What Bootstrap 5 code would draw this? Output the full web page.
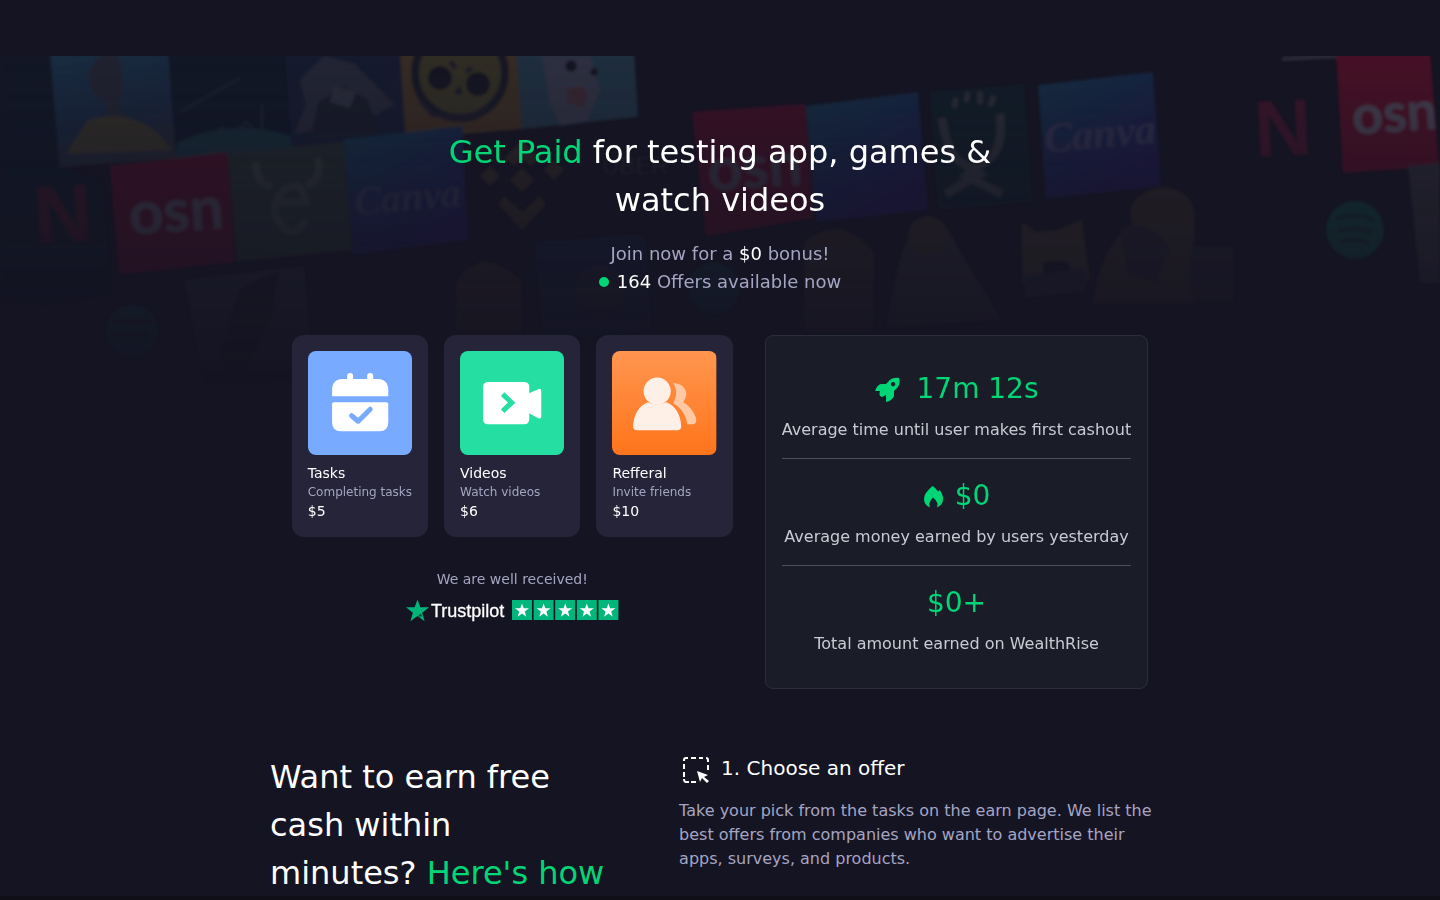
<!DOCTYPE html>
<html lang="en">
<head>
<meta charset="utf-8">
<meta name="viewport" content="width=device-width, initial-scale=1">
<title>WealthRise</title>
<link href="https://cdn.jsdelivr.net/npm/bootstrap@5.3.0/dist/css/bootstrap.min.css" rel="stylesheet">
<style>
:root{--accent:#01d676;--muted:#a5a5c3}
body{background:#151422;color:#fff;font-family:"DejaVu Sans",sans-serif}
.page{min-height:100vh;overflow:hidden}
.page::after{content:"";position:absolute;left:0;right:0;bottom:0;height:4px;background:#100e17}
.accent{color:var(--accent)}
.soft{color:var(--muted)}
.hero{padding-top:128px}
.collage{position:absolute;top:56px;left:0;width:100%;height:auto;opacity:.75}
.hero-body{z-index:1}
.title{font-size:32px;line-height:48px;font-weight:400}
.hero .title{max-width:600px}
.lead-line{font-size:18px;line-height:28px}
.dot{width:10px;height:10px}
.offers{padding-top:39px;gap:32px}
.tiles{display:grid;grid-template-columns:repeat(3,1fr);gap:16px}
.tile{background:#252438;border-radius:12px}
.tile-art{border-radius:8px;width:0;min-width:100%;aspect-ratio:1}
.t14{font-size:14px;line-height:20px}
.t12{font-size:12px;line-height:18px}
.stats{background:#1a1d28;border:1px solid #2b2e3a;border-radius:8px}
.stat{padding:16px 0}
.stat + .stat{border-top:1px solid #4d505c}
.figure-text{font-size:28px;line-height:42px}
.stat-label{color:#c9cbd4}
.how{max-width:900px;padding-top:64px}
.step-title{font-size:20px;line-height:30px}
@media(min-width:768px){.how{display:grid;grid-template-columns:5fr 6fr}}
@media(max-width:991px){.offers{flex-wrap:wrap}}
</style>
</head>
<body>
<main class="page position-relative">
<svg class="collage" viewBox="0 0 1440 330" aria-hidden="true">
  <defs>
    <linearGradient id="fade" x1="0" y1="0" x2="0" y2="1"><stop offset="0" stop-color="#fff" stop-opacity=".64"/><stop offset=".3" stop-color="#fff" stop-opacity=".42"/><stop offset=".6" stop-color="#fff" stop-opacity=".26"/><stop offset="1" stop-color="#fff" stop-opacity="0"/></linearGradient>
    <mask id="m" maskUnits="userSpaceOnUse" x="0" y="0" width="1440" height="330"><rect width="1440" height="330" fill="url(#fade)"/></mask>
    <linearGradient id="cv" x1="0" y1="0" x2=".5" y2="1"><stop offset="0" stop-color="#0f4a63"/><stop offset="1" stop-color="#241a62"/></linearGradient>
    <linearGradient id="sky" x1="0" y1="0" x2=".3" y2="1"><stop offset="0" stop-color="#1e4862"/><stop offset=".6" stop-color="#1a3655"/><stop offset="1" stop-color="#2b343e"/></linearGradient>
    <filter id="b" x="-5%" y="-5%" width="110%" height="110%"><feGaussianBlur stdDeviation="1.8"/></filter>
  </defs>
  <g mask="url(#m)"><g filter="url(#b)">
    <path d="M0 0h50l12 110 40 16 10 110-70 12-42-6z" fill="#111b2b"/>
    <path d="M50-5H168l8 107-116 9z" fill="url(#sky)"/>
    <path d="M97 2q10-10 22 0l4 24-3 26 8 14h-22l2-16-16-14-4-18z" fill="#2f3240"/><path d="M66 98q12-18 22-34 40-12 70 14l14 16z" fill="#4c462d"/>
    <path d="M168-5H290L296 90 176 100z" fill="#101d29"/><path d="M178 86q60-26 116-4v12l-120 10z" fill="#173d46"/>
    <path d="M180 56l60-34M210 80l12-8 12 6 12-12 10 10M262 48v30" stroke="#203542" stroke-width="2" fill="none"/>
    <path d="M285-5H400L408 84 292 92z" fill="#14233b"/><path d="M300 24l24-24 30 8 16 16 24 24-20 12-30-14-28 28-22 4 12-28z" fill="#303846"/><path d="M318 46l26-16 24 14 12 34-70 6z" fill="#1d2430"/><path d="M334 30l22 6-6 16-20-6z" fill="#3d4551"/>
    <path d="M400-5H516l6 78-116 10z" fill="#5a4526"/><circle cx="460" cy="17" r="45" fill="#4d4826" stroke="#191a28" stroke-width="8"/><circle cx="440" cy="22" r="12" fill="#151522"/><circle cx="478" cy="28" r="12" fill="#151522"/><path d="M450 6l6 6M472 12l-6 4M456 38l3-4 2 4M420 44l12 14 24 4 24-4 8-8" fill="none" stroke="#202030" stroke-width="5"/>
    <path d="M516-5H634l4 66-116 12z" fill="#2b4c5d"/><path d="M542 0h48l10 34-14 32-26 4-10-24z" fill="#4a4f62"/><circle cx="571" cy="10" r="6" fill="#151824"/><circle cx="594" cy="16" r="4" fill="#151824"/><path d="M566 34q14-8 22 2l-4 16-16-4z" fill="#593a43"/>
    <path d="M110 110l117-14 8 110-116 13z" fill="#630f2a"/><text x="129" y="176" fill="#655c70" font-family="Lato" font-size="60" font-weight="700" transform="rotate(-4 170 160)">osn</text>
    <text x="34" y="186" fill="#4c142b" font-family="'Liberation Sans Narrow','Liberation Sans',sans-serif" font-weight="700" font-size="80" transform="rotate(-3 55 160)">N</text>
    <path d="M228 98l116-12 8 108-115 12z" fill="#2b3a35"/><path d="M256 106q0 24 16 24m46-28q4 24-12 28M278 146h28q-4-24-22-12-18 18 0 38 10 10 22-8" stroke="#434f4a" stroke-width="7" fill="none"/>
    <path d="M344 84l118-14 6 114-115 15z" fill="url(#cv)"/><text x="354" y="155" fill="#3f4770" font-family="Liberation Serif" font-style="italic" font-weight="700" font-size="40" transform="rotate(-5 400 140)">Canva</text>
    <g fill="#42392a"><path d="M522 84l18 18-10 8-8-8-8 8-10-8zM490 110l10 10-10 10-10-10zM554 104l10 10-10 10-10-10zM522 112l12 12-12 12-12-12zM504 140l18 16 18-16 6 8-24 26-24-26z"/></g>
    <text x="602" y="118" fill="#333340" font-family="Liberation Sans" font-size="24">UBER</text>
    <path d="M692 56l113-8 8 114-107 18z" fill="#630f2a"/><text x="708" y="132" fill="#574d61" font-family="Lato" font-size="60" font-weight="700" transform="rotate(-4 750 120)">osn</text>
    <path d="M806 50l112-14 10 118-112 12z" fill="url(#cv)"/>
    <path d="M930 36l94-8 8 118-94 8z" fill="#10262d"/><path d="M942 62q6 40 22 46l16 10-34 20M1000 58q4 40-16 48l-18 14 36 18" stroke="#3c474b" stroke-width="8" fill="none"/><path d="M954 52l2-10M966 46l2-10M980 48v-12M990 50l4-10" stroke="#3c474b" stroke-width="5"/>
    <path d="M1038 29l115-13 8 114-115 13z" fill="url(#cv)"/><text x="1044" y="92" fill="#474a74" font-family="Liberation Serif" font-style="italic" font-weight="700" font-size="42" transform="rotate(-5 1095 80)">Canva</text>
    <text x="1254" y="100" fill="#5e1632" font-family="'Liberation Sans Narrow','Liberation Sans',sans-serif" font-weight="700" font-size="80" transform="rotate(-3 1280 70)">N</text>
    <path d="M1282 1l54-4v5l-54 3z" fill="#444652"/><path d="M1336-3H1430l9 113-96 7z" fill="#7c102c"/><text x="1352" y="76" fill="#756c80" font-family="Lato" font-size="54" font-weight="700" transform="rotate(-4 1390 60)">osn</text>
    <circle cx="1355" cy="174" r="29" fill="#0c584c"/><path d="M1336 163q22-8 38 2M1338 175q20-6 34 2M1340 186q17-5 29 2" stroke="#0f3037" stroke-width="4" fill="none"/>
    <path d="M1408 110l32-3v120h-20z" fill="#3a3b43"/>
    <path d="M1022 228v-62l14 10 22-2 24-10 8 60-16 4-6-22h-24v22z" fill="#47402c"/><path d="M1024 220l62-8v24l-62 6z" fill="#2c2e3d"/>
    <path d="M1092 248q10-60 40-80-8-24 18-34 24-8 40 10 10 16 0 70l6 34z" fill="#3c362b"/><path d="M1190 190h44v56h-44zM1120 172q30-10 50 20l-14 34-30-10z" fill="#2c2733"/>
    <path d="M886 272q14-90 32-104 24-14 40 24l44 72z" fill="#38343e"/><circle cx="928" cy="180" r="20" fill="#40382d"/><path d="M804 186q36-30 70 10v80h-70z" fill="#38332f"/>
    <path d="M184 224l120-14 10 116-110 4z" fill="#2d3140"/><path d="M240 232l40-18-12 60-30 50-20-20z" fill="#1b1b25"/><circle cx="132" cy="275" r="26" fill="#0d4c4c"/><path d="M112 266h40M114 278h36" stroke="#12252f" stroke-width="6"/>
    <path d="M456 226q26-40 66 0v60h-66z" fill="#3a312b"/><path d="M536 186l108-8 8 96-110 12z" fill="#152843"/><circle cx="600" cy="236" r="26" fill="#262937"/><circle cx="714" cy="232" r="26" fill="#0e3b44"/>
  </g></g>
</svg>

<section class="hero hero-body position-relative px-3">
  <div class="text-center">
    <h1 class="title mx-auto mb-3"><span class="accent">Get Paid</span> for testing app, games &amp; watch videos</h1>
    <p class="lead-line soft mb-0">Join now for a <span class="text-white">$0</span> bonus!</p>
    <p class="lead-line soft mb-0 d-flex justify-content-center align-items-center"><svg class="dot me-2" viewBox="0 0 10 10" aria-hidden="true"><circle cx="5" cy="5" r="5" fill="#01d676"/></svg><span><span class="text-white">164</span> Offers available now</span></p>
  </div>
  <div class="offers d-flex justify-content-center align-items-start">
    <div>
      <div class="tiles">
        <article class="tile p-3">
          <svg class="tile-art d-block mb-2" viewBox="0 0 104 104" aria-hidden="true"><rect width="104" height="104" fill="#78abff"/><path d="M24 45v-6q0-11 11-11h4v-3a3 3 0 0 1 6 0v3h14v-3a3 3 0 0 1 6 0v3h4q11 0 11 11v6z" fill="#fff"/><path d="M26 51h52q2 0 2 2v18q0 9-9 9H33q-9 0-9-9V53q0-2 2-2z" fill="#fff"/><path d="M43.500 64.500l6.500 5.500 12-12" fill="none" stroke="#78abff" stroke-width="5" stroke-linecap="round" stroke-linejoin="round"/></svg>
          <div class="t14">Tasks</div><div class="t12 soft text-nowrap">Completing tasks</div><div class="t14">$5</div>
        </article>
        <article class="tile p-3">
          <svg class="tile-art d-block mb-2" viewBox="0 0 104 104" aria-hidden="true"><rect width="104" height="104" fill="#24dfa1"/><path d="M28 31h36q5 0 5 5v6l9-4q3-1 3 2v25q0 3-3 2l-9-5v6q0 5-5 5H28q-5 0-5-5V36q0-5 5-5z" fill="#fff"/><path d="M42.500 43l9 8.500-9 8.500" fill="none" stroke="#24dfa1" stroke-width="5"/></svg>
          <div class="t14">Videos</div><div class="t12 soft text-nowrap">Watch videos</div><div class="t14">$6</div>
        </article>
        <article class="tile p-3">
          <svg class="tile-art d-block mb-2" viewBox="0 0 104 104" aria-hidden="true"><defs><linearGradient id="or" x1="0" y1="0" x2="0" y2="1"><stop stop-color="#ff964f"/><stop offset="1" stop-color="#ff741b"/></linearGradient></defs><rect width="104" height="104" fill="url(#or)"/><circle cx="45" cy="40" r="13.500" fill="#fff0e7"/><path d="M35.500 51q9 4 19 0Q68 57 69 75q0 4-4 4H25q-4 0-4-4 1-18 14.500-24z" fill="#fff0e7"/><path d="M61 32c8 0 13 5 13 11q0 4-3 8c8 4 13 14 13 18q0 4-4 4h-5c-1-8-5-16-14-21 4-7 4-14 0-20z" fill="#ffc9a6"/></svg>
          <div class="t14">Refferal</div><div class="t12 soft text-nowrap">Invite friends</div><div class="t14">$10</div>
        </article>
      </div>
      <div class="text-center mt-4 pt-2">
        <div class="t14 soft mb-2">We are well received!</div>
        <svg width="214" height="24" viewBox="0 0 214 24" role="img" aria-label="Trustpilot, five stars">
          <defs><path id="st" d="M0-7l1.700 4.800H7L2.800 1 4.300 6.200 0 3.100-4.300 6.200-2.800 1-7-2.200h5.300z"/></defs>
          <use href="#st" transform="translate(12.500 13) scale(1.650)" fill="#00b67a"/><path d="M16 15.500l1 3-4.500 0z" fill="#005128"/>
          <text x="26" y="19" fill="#fff" stroke="#fff" stroke-width=".3" font-family="Liberation Sans" font-size="18">Trustpilot</text>
          <g fill="#00b67a"><path d="M107 2h20v20h-20zM128.600 2h20v20h-20zM150.200 2h20v20h-20zM171.800 2h20v20h-20zM193.400 2h20v20h-20z"/></g>
          <g fill="#fff"><use href="#st" x="117" y="12.500"/><use href="#st" x="138.600" y="12.500"/><use href="#st" x="160.200" y="12.500"/><use href="#st" x="181.800" y="12.500"/><use href="#st" x="203.400" y="12.500"/></g>
        </svg>
      </div>
    </div>
    <div class="stats p-3 text-center">
      <div class="stat">
        <div class="figure-text accent mb-2 d-flex justify-content-center align-items-center"><svg class="me-3" width="26" height="26" viewBox="0 0 26 26" aria-hidden="true"><path fill="#01d676" fill-rule="evenodd" d="M24 2Q17 1 13 6L11 8H6Q2 9 0 15q3 0 5 0-1 3 0 5l2 1 4-2v7q6-1 8-6v-5l2-2q5-4 3-11zM18 6a2.200 2.200 0 1 0 .1 0z"/></svg><span>17m 12s</span></div>
        <div class="stat-label">Average time until user makes first cashout</div>
      </div>
      <div class="stat">
        <div class="figure-text accent mb-2 d-flex justify-content-center align-items-center"><svg class="me-2" width="24" height="24" viewBox="0 0 24 24" aria-hidden="true"><path fill="#01d676" d="M9.500 2q3.500 2 5.500 5.500L16.500 6Q20 10 20 15q0 6-6 8.500 2-5-4-10-5 5-3 10Q1 21 1 15q0-6 8.500-13z"/></svg><span>$0</span></div>
        <div class="stat-label">Average money earned by users yesterday</div>
      </div>
      <div class="stat">
        <div class="figure-text accent mb-2">$0+</div>
        <div class="stat-label">Total amount earned on WealthRise</div>
      </div>
    </div>
  </div>
</section>

<section class="how mx-auto">
  <h2 class="title mb-0">Want to earn free<br>cash within<br>minutes? <span class="accent">Here's how</span></h2>
  <div>
    <h3 class="step-title fw-normal d-flex align-items-center mb-3"><svg class="me-2" width="34" height="30" viewBox="0 0 34 30" aria-hidden="true"><g fill="none" stroke="#fff" stroke-width="2"><path d="M5 8V7q0-2 2-2h2M12 5h5M20 5h4M27 5q2 0 2 2v2M29 12v5M5 11v5M5 19v5M5 26q0 3 2 3h3M12 29h5"/></g><path d="M18 18l11 4-4 2 5 4-2 2-5-5-2 4z" fill="#fff"/></svg><span>1. Choose an offer</span></h3>
    <p class="soft mb-0">Take your pick from the tasks on the earn page. We list the best offers from companies who want to advertise their apps, surveys, and products.</p>
  </div>
</section>
</main>
<script src="https://cdn.jsdelivr.net/npm/bootstrap@5.3.0/dist/js/bootstrap.bundle.min.js"></script>
</body>
</html>
